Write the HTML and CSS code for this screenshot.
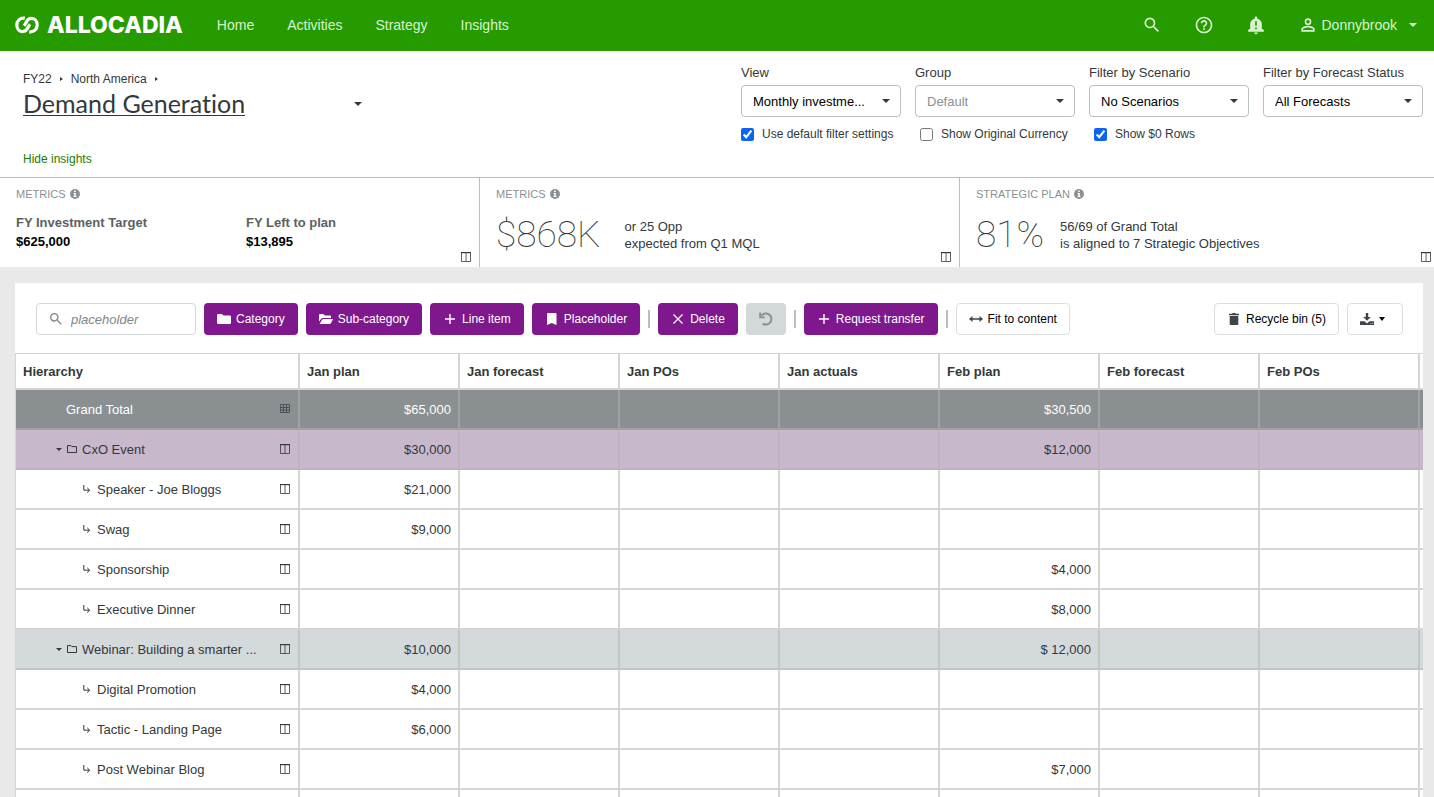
FILE: index.html
```
<!DOCTYPE html>
<html lang="en">
<head>
  <meta charset="UTF-8" />
  <meta name="viewport" content="width=device-width, initial-scale=1.0" />
  <title>Allocadia - Demand Generation</title>
  <link rel="stylesheet" href="styles.css">
</head>
<body>
  <!-- Shared icons -->
  <svg class="sprite" aria-hidden="true">
    <symbol id="i-caret" viewBox="0 0 8 4"><path d="M0 0h8L4 4z" fill="currentColor"/></symbol>
    <symbol id="i-search" viewBox="0 0 24 24"><path fill="currentColor" d="M15.5 14h-.79l-.28-.27A6.47 6.47 0 0 0 16 9.5 6.5 6.5 0 1 0 9.5 16c1.61 0 3.09-.59 4.23-1.57l.27.28v.79l5 4.99L20.49 19l-4.99-5zm-6 0C7.01 14 5 11.99 5 9.5S7.01 5 9.5 5 14 7.01 14 9.5 11.99 14 9.5 14z"/></symbol>
    <symbol id="i-plus" viewBox="0 0 14 14"><path d="M7 2v10M2 7h10" stroke="currentColor" stroke-width="1.4" fill="none"/></symbol>
    <symbol id="i-info" viewBox="0 0 10 10"><circle cx="5" cy="5" r="5" fill="currentColor"/><path d="M4.2 1.6h1.6v1.5H4.2zM3.6 4h2.2v3.1h.7v1h-3v-1h.7V5h-.6z" fill="#fff"/></symbol>
    <symbol id="i-cols" viewBox="0 0 10 10"><path d="M.5 1v8.5h9V1M5 1v8.5" stroke="currentColor" stroke-width=".8" fill="none"/><path d="M0 0h10v1.2H0z" fill="currentColor"/></symbol>
    <symbol id="i-grid" viewBox="0 0 10 10"><path d="M.5 .5h9v8h-9zM.5 3.5h9M.5 6h9M3.5 1v8M6.5 1v8" stroke="currentColor" stroke-width=".9" fill="none"/></symbol>
    <symbol id="i-folder" viewBox="0 0 10 8"><path d="M.5 1v6.5h9V1.6H4.8L4 .6H.5z" stroke="currentColor" fill="none"/></symbol>
    <symbol id="i-child" viewBox="0 0 8 8"><path d="M.8 0v5.2h5.6M4.2 2.8l2.5 2.4-2.5 2.4" stroke="currentColor" fill="none"/></symbol>
  </svg>

  <div class="app">
    <header class="topbar">
      <a class="logo" href="#">
        <svg width="24" height="18" viewBox="0 0 24 18" aria-hidden="true">
          <g fill="none" stroke="#fff" stroke-width="3.2">
            <path d="M9.800 2.200C5 1.400 1.800 5 1.800 9s2.800 6.600 6 6.600c4.800 0 4.700-4.600 7.200-7.400"/>
            <path d="M14.200 15.800c4.800.8 8-2.800 8-6.800s-2.800-6.600-6-6.600c-4.800 0-4.700 4.600-7.200 7.400"/>
          </g>
        </svg>
        <span class="logo-text">ALLOCADIA</span>
      </a>
      <nav class="nav">
        <a href="#">Home</a>
        <a href="#">Activities</a>
        <a href="#">Strategy</a>
        <a href="#">Insights</a>
      </nav>
      <div class="tools">
        <button class="tool" aria-label="Search"><svg width="20" height="20"><use href="#i-search"/></svg></button>
        <button class="tool" aria-label="Help">
          <svg width="20" height="20" viewBox="0 0 24 24"><path fill="currentColor" d="M11 18h2v-2h-2v2zm1-16C6.480 2 2 6.480 2 12s4.480 10 10 10 10-4.480 10-10S17.520 2 12 2zm0 18c-4.410 0-8-3.590-8-8s3.590-8 8-8 8 3.590 8 8-3.590 8-8 8zm0-14c-2.210 0-4 1.790-4 4h2c0-1.100.9-2 2-2s2 .9 2 2c0 2-3 1.750-3 5h2c0-2.250 3-2.500 3-5 0-2.210-1.790-4-4-4z"/></svg>
        </button>
        <button class="tool" aria-label="Notifications">
          <svg width="20" height="20" viewBox="0 0 24 24"><path fill="currentColor" d="M19 16.500V11c0-3.300-2-5.900-5.300-6.600V3.500a1.700 1.700 0 0 0-3.400 0v.9C7 5.100 5 7.700 5 11v5.500L2.500 18v2h19v-2zm-6 .5h-2v-2h2zm0-4h-2V7.500h2zM12 23c1.200 0 2.200-.9 2.200-2H9.800c0 1.100 1 2 2.200 2z"/></svg>
        </button>
        <button class="user">
          <svg width="20" height="20" viewBox="0 0 24 24"><path fill="currentColor" d="M12 5.900a2.100 2.100 0 1 1 0 4.200 2.100 2.100 0 0 1 0-4.200m0 9c2.970 0 6.100 1.460 6.100 2.100v1.100H5.900V17c0-.64 3.130-2.100 6.100-2.100M12 4a4 4 0 1 0 0 8 4 4 0 0 0 0-8zm0 9c-2.670 0-8 1.340-8 4v3h16v-3c0-2.660-5.330-4-8-4z"/></svg>
          <span>Donnybrook</span>
          <svg class="caret" width="8" height="4"><use href="#i-caret"/></svg>
        </button>
      </div>
    </header>

    <section class="page-head">
      <div class="heading">
        <div class="crumbs">
          <a href="#">FY22</a><svg width="3" height="4" viewBox="0 0 3 4"><path d="M0 0l3 2-3 2z" fill="currentColor"/></svg>
          <a href="#">North America</a><svg width="3" height="4" viewBox="0 0 3 4"><path d="M0 0l3 2-3 2z" fill="currentColor"/></svg>
        </div>
        <div class="title-row">
          <h1>Demand Generation</h1>
          <button class="title-toggle" aria-label="Choose budget"><svg width="8" height="4"><use href="#i-caret"/></svg></button>
        </div>
        <a class="hide-link" href="#">Hide insights</a>
      </div>
      <div class="filters">
        <div class="filter">
          <label for="view">View</label>
          <div class="select">
            <select id="view"><option>Monthly investme...</option></select>
            <svg width="8" height="4"><use href="#i-caret"/></svg>
          </div>
          <label class="check"><input type="checkbox" checked> Use default filter settings</label>
        </div>
        <div class="filter">
          <label for="group">Group</label>
          <div class="select">
            <select id="group" class="muted"><option>Default</option></select>
            <svg width="8" height="4"><use href="#i-caret"/></svg>
          </div>
          <label class="check check-inset"><input type="checkbox"> Show Original Currency</label>
        </div>
        <div class="filter">
          <label for="scenario">Filter by Scenario</label>
          <div class="select">
            <select id="scenario"><option>No Scenarios</option></select>
            <svg width="8" height="4"><use href="#i-caret"/></svg>
          </div>
          <label class="check check-inset"><input type="checkbox" checked> Show $0 Rows</label>
        </div>
        <div class="filter">
          <label for="forecast">Filter by Forecast Status</label>
          <div class="select">
            <select id="forecast"><option>All Forecasts</option></select>
            <svg width="8" height="4"><use href="#i-caret"/></svg>
          </div>
        </div>
      </div>
    </section>

    <section class="insights">
      <article class="insight">
        <h2>METRICS <svg width="10" height="10"><use href="#i-info"/></svg></h2>
        <div class="targets">
          <div><span class="target-name">FY Investment Target</span><strong>$625,000</strong></div>
          <div><span class="target-name">FY Left to plan</span><strong>$13,895</strong></div>
        </div>
        <svg class="detail" width="10" height="10"><use href="#i-cols"/></svg>
      </article>
      <article class="insight">
        <h2>METRICS <svg width="10" height="10"><use href="#i-info"/></svg></h2>
        <div class="figure figure-wide">
          <span class="big">$868K</span>
          <p>or 25 Opp<br>expected from Q1 MQL</p>
        </div>
        <svg class="detail" width="10" height="10"><use href="#i-cols"/></svg>
      </article>
      <article class="insight">
        <h2>STRATEGIC PLAN <svg width="10" height="10"><use href="#i-info"/></svg></h2>
        <div class="figure">
          <span class="big">81%</span>
          <p>56/69 of Grand Total<br>is aligned to 7 Strategic Objectives</p>
        </div>
        <svg class="detail" width="10" height="10"><use href="#i-cols"/></svg>
      </article>
    </section>

    <main class="workspace">
      <div class="panel">
        <div class="toolbar">
          <label class="search">
            <svg width="16" height="16"><use href="#i-search"/></svg>
            <input type="text" placeholder="placeholder" aria-label="Search rows">
          </label>
          <button class="btn primary"><svg width="14" height="14" viewBox="0 0 14 14"><path d="M0 3.200Q0 2 1.200 2h3.600l1.700 1.600h6.300Q14 3.600 14 4.800v6Q14 12 12.800 12H1.200Q0 12 0 10.800z" fill="currentColor"/></svg>Category</button>
          <button class="btn primary"><svg width="14" height="14" viewBox="0 0 14 14"><path d="M0 9.500V3q0-1 1-1h3.200l1.600 1.500H11q1 0 1 1V6H3.800q-1 0-1.500.8zM.6 12l2.500-4.300q.4-.7 1.100-.7h9.200q.9 0 .4.800l-2 3.400q-.4.800-1.200.8z" fill="currentColor"/></svg>Sub-category</button>
          <button class="btn primary"><svg width="14" height="14"><use href="#i-plus"/></svg>Line item</button>
          <button class="btn primary"><svg width="14" height="14" viewBox="0 0 14 14"><path d="M2 2q0-1 1-1h7.500q1 0 1 1v11L6.800 11 2 13z" fill="currentColor"/></svg>Placeholder</button>
          <span class="divider"></span>
          <button class="btn primary"><svg width="14" height="14" viewBox="0 0 14 14"><path d="M2.500 2.500l9 9M11.500 2.500l-9 9" stroke="currentColor" stroke-width="1.300" fill="none"/></svg>Delete</button>
          <button class="btn disabled" disabled aria-label="Undo"><svg width="16" height="16" viewBox="0 0 16 16"><path d="M3.200 4.800A5.600 5.600 0 1 1 4.600 12.600" stroke="currentColor" stroke-width="2" fill="none"/><path d="M1.200 1.600v5.600h5.600V5.500H3V1.600z" fill="currentColor"/></svg></button>
          <span class="divider"></span>
          <button class="btn primary"><svg width="14" height="14"><use href="#i-plus"/></svg>Request transfer</button>
          <span class="divider"></span>
          <button class="btn outline"><svg width="14" height="14" viewBox="0 0 14 14"><path d="M0 7l3.500-3v2.200h7V4L14 7l-3.500 3V7.800h-7V10z" fill="currentColor"/></svg>Fit to content</button>
          <button class="btn outline push"><svg width="14" height="14" viewBox="0 0 14 14"><path d="M2 1.800h3L5.600 1h2.800l.6.800h3v1.400H2zM2.700 4h8.600v8q0 1-1 1H3.700q-1 0-1-1z" fill="currentColor"/></svg>Recycle bin (5)</button>
          <button class="btn outline download" aria-label="Download"><svg width="14" height="14" viewBox="0 0 14 14"><path d="M5.800 1h2.400v4h2.600L7 8.800 3.200 5h2.600zM0 9.200h4.600L7 11.400l2.400-2.200H14V13H0z" fill="currentColor"/><path d="M10.500 11.300h.9M12.200 11.300h.9" stroke="#fff" stroke-width=".7"/></svg><svg class="caret-small" width="6" height="4" viewBox="0 0 6 4"><path d="M0 0h6L3 4z" fill="currentColor"/></svg></button>
        </div>

        <div class="table-wrap">
          <table>
            <thead>
              <tr><th class="name-col" scope="col">Hierarchy</th><th scope="col">Jan plan</th><th scope="col">Jan forecast</th><th scope="col">Jan POs</th><th scope="col">Jan actuals</th><th scope="col">Feb plan</th><th scope="col">Feb forecast</th><th scope="col">Feb POs</th><th></th></tr>
            </thead>
            <tbody>
              <tr class="total">
                <td><div class="name top"><span>Grand Total</span><svg width="10" height="10"><use href="#i-grid"/></svg></div></td>
                <td>$65,000</td><td></td><td></td><td></td><td>$30,500</td><td></td><td></td><td></td>
              </tr>
              <tr class="selected">
                <td><div class="name parent"><svg width="6" height="3"><use href="#i-caret"/></svg><svg width="10" height="8"><use href="#i-folder"/></svg><span>CxO Event</span><svg width="10" height="10"><use href="#i-cols"/></svg></div></td>
                <td>$30,000</td><td></td><td></td><td></td><td>$12,000</td><td></td><td></td><td></td>
              </tr>
              <tr>
                <td><div class="name child"><svg width="8" height="8"><use href="#i-child"/></svg><span>Speaker - Joe Bloggs</span><svg width="10" height="10"><use href="#i-cols"/></svg></div></td>
                <td>$21,000</td><td></td><td></td><td></td><td></td><td></td><td></td><td></td>
              </tr>
              <tr>
                <td><div class="name child"><svg width="8" height="8"><use href="#i-child"/></svg><span>Swag</span><svg width="10" height="10"><use href="#i-cols"/></svg></div></td>
                <td>$9,000</td><td></td><td></td><td></td><td></td><td></td><td></td><td></td>
              </tr>
              <tr>
                <td><div class="name child"><svg width="8" height="8"><use href="#i-child"/></svg><span>Sponsorship</span><svg width="10" height="10"><use href="#i-cols"/></svg></div></td>
                <td></td><td></td><td></td><td></td><td>$4,000</td><td></td><td></td><td></td>
              </tr>
              <tr>
                <td><div class="name child"><svg width="8" height="8"><use href="#i-child"/></svg><span>Executive Dinner</span><svg width="10" height="10"><use href="#i-cols"/></svg></div></td>
                <td></td><td></td><td></td><td></td><td>$8,000</td><td></td><td></td><td></td>
              </tr>
              <tr class="category">
                <td><div class="name parent"><svg width="6" height="3"><use href="#i-caret"/></svg><svg width="10" height="8"><use href="#i-folder"/></svg><span>Webinar: Building a smarter ...</span><svg width="10" height="10"><use href="#i-cols"/></svg></div></td>
                <td>$10,000</td><td></td><td></td><td></td><td>$ 12,000</td><td></td><td></td><td></td>
              </tr>
              <tr>
                <td><div class="name child"><svg width="8" height="8"><use href="#i-child"/></svg><span>Digital Promotion</span><svg width="10" height="10"><use href="#i-cols"/></svg></div></td>
                <td>$4,000</td><td></td><td></td><td></td><td></td><td></td><td></td><td></td>
              </tr>
              <tr>
                <td><div class="name child"><svg width="8" height="8"><use href="#i-child"/></svg><span>Tactic - Landing Page</span><svg width="10" height="10"><use href="#i-cols"/></svg></div></td>
                <td>$6,000</td><td></td><td></td><td></td><td></td><td></td><td></td><td></td>
              </tr>
              <tr>
                <td><div class="name child"><svg width="8" height="8"><use href="#i-child"/></svg><span>Post Webinar Blog</span><svg width="10" height="10"><use href="#i-cols"/></svg></div></td>
                <td></td><td></td><td></td><td></td><td>$7,000</td><td></td><td></td><td></td>
              </tr>
              <tr><td></td><td></td><td></td><td></td><td></td><td></td><td></td><td></td><td></td></tr>
            </tbody>
          </table>
        </div>
      </div>
    </main>
  </div>
</body>
</html>
```
FILE: styles.css
```
:root {
  --green: #259b00;
  --purple: #7f188d;
  --text: #33383b;
  --line: #b9c0c0;
  --grid: rgba(178, 178, 178, 0.55);
}
* {
  box-sizing: border-box;
  margin: 0;
  padding: 0;
}
body {
  font-family: "Liberation Sans", Arial, sans-serif;
  font-size: 13px;
  color: var(--text);
  background-color: #fff;
}
a {
  color: inherit;
  text-decoration: none;
}
button, input, select {
  font-family: inherit;
}
button {
  border: none;
  background: none;
  cursor: pointer;
}
svg {
  display: block;
  flex: none;
}
.sprite {
  display: none;
}
.app {
  display: flex;
  flex-direction: column;
  height: 100vh;
  overflow: hidden;
}

/* Top bar */
.topbar {
  display: flex;
  align-items: center;
  flex: none;
  height: 51px;
  padding: 0 17px 2px 15px;
  background-color: var(--green);
  color: #d9f2d2;
}
.logo {
  display: flex;
  align-items: center;
  gap: 8px;
  color: #fff;
}
.logo-text {
  font-family: Inter, sans-serif;
  font-size: 23px;
  font-weight: 800;
  line-height: 24px;
}
.nav {
  display: flex;
  gap: 33px;
  margin-left: 34px;
  font-size: 14px;
}
.tools {
  display: flex;
  align-items: center;
  gap: 32px;
  margin-left: auto;
}
.tool, .user {
  display: flex;
  align-items: center;
  color: inherit;
}
.user {
  gap: 4px;
  font-size: 14px;
}
.user .caret {
  margin-left: 8px;
}

/* Page heading and filters */
.page-head {
  display: flex;
  justify-content: space-between;
  flex: none;
  padding: 14px 11px 9px 23px;
}
.heading {
  display: flex;
  flex-direction: column;
  align-items: flex-start;
  padding-top: 6px;
}
.crumbs {
  display: flex;
  align-items: center;
  gap: 8px;
  font-size: 12px;
  line-height: 16px;
}
.title-row {
  display: flex;
  align-items: center;
  justify-content: space-between;
  width: 339px;
  margin-top: 4px;
}
h1 {
  border-bottom: 1px solid var(--text);
  font-family: Lato, sans-serif;
  font-size: 25px;
  font-weight: 400;
  font-variant-ligatures: none;
  line-height: 24px;
}
.title-toggle {
  color: var(--text);
}
.hide-link {
  margin-top: 34px;
  color: #1c7c00;
  font-size: 12px;
  line-height: 18px;
}
.filters {
  display: flex;
  gap: 14px;
}
.filter {
  width: 160px;
}
.filter label {
  display: block;
  line-height: 16px;
  white-space: nowrap;
}
.select {
  display: grid;
  align-items: center;
  margin-top: 4px;
}
.select > * {
  grid-area: 1 / 1;
}
.select select {
  width: 100%;
  height: 32px;
  padding: 0 28px 0 11px;
  border: 1px solid var(--line);
  border-radius: 4px;
  background-color: #fff;
  color: #000;
  font-size: 13px;
  appearance: none;
}
.select .muted {
  color: #8b9093;
}
.select svg {
  justify-self: end;
  margin-right: 11px;
  pointer-events: none;
}
.filter .check {
  display: flex;
  align-items: center;
  gap: 8px;
  margin-top: 9px;
  font-size: 12px;
}
.check input {
  width: 13px;
  height: 13px;
  accent-color: #0d63f8;
}
.filter .check-inset {
  padding-left: 5px;
}

/* Insights strip, last card runs past the edge of the window */
.insights {
  display: grid;
  grid-template-columns: repeat(3, minmax(0, 1fr));
  flex: none;
  margin-right: -6px;
  border-top: 1px solid var(--line);
}
.insight {
  position: relative;
  height: 89px;
  padding: 8px 16px;
  border-right: 1px solid var(--line);
}
.insight h2 {
  display: flex;
  align-items: center;
  gap: 4px;
  color: #8b9093;
  font-size: 11px;
  font-weight: 400;
  line-height: 16px;
}
.targets {
  display: flex;
  margin-top: 11px;
}
.targets > div {
  width: 230px;
  flex: none;
  line-height: 19px;
}
.target-name {
  display: block;
  color: #5b6164;
  font-weight: 700;
}
.targets strong {
  display: block;
  color: #000;
}
.figure {
  display: flex;
  align-items: center;
  gap: 16px;
  margin-top: 13px;
}
.figure-wide {
  gap: 24px;
}
.figure p {
  line-height: 17px;
}
.big {
  font-family: Roboto, sans-serif;
  font-size: 37px;
  font-weight: 100;
  line-height: 40px;
}
.detail {
  position: absolute;
  right: 8px;
  bottom: 5px;
}

/* Planning table */
.workspace {
  flex: 1;
  min-height: 0;
  padding: 16px 11px 0 15px;
  background-color: #e9e9e9;
}
.panel {
  height: 100%;
  overflow: hidden;
  background-color: #fff;
}
.toolbar {
  display: flex;
  align-items: center;
  gap: 8px;
  padding: 20px 20px 18px 21px;
}
.search {
  display: flex;
  align-items: center;
  gap: 7px;
  width: 160px;
  height: 32px;
  padding: 0 11px;
  border: 1px solid #d2d8d9;
  border-radius: 4px;
  color: #80868a;
}
.search input {
  width: 100%;
  min-width: 0;
  border: none;
  outline: none;
  font-size: 13px;
}
.search input::placeholder {
  color: #80868a;
  font-style: italic;
}
.btn {
  display: flex;
  align-items: center;
  gap: 5px;
  height: 32px;
  padding: 0 13px;
  border-radius: 4px;
  font-size: 12px;
  white-space: nowrap;
}
.primary {
  background-color: var(--purple);
  color: #fff;
}
.outline {
  padding: 0 12px;
  border: 1px solid #dcdfe0;
  background-color: #fff;
  color: #000;
}
.outline svg {
  color: #3f4548;
}
.outline .caret-small {
  color: #000;
}
.download {
  padding-right: 17px;
}
.disabled {
  padding: 0 12px;
  background-color: #d3d9db;
  color: #8b9093;
}
.divider {
  width: 2px;
  height: 18px;
  background-color: #bdbdbd;
}
.push {
  margin-left: auto;
}
.table-wrap {
  overflow: hidden;
}
table {
  width: 1565px;
  table-layout: fixed;
  border-spacing: 0;
  border-left: 1px solid #d5d5d5;
}
th, td {
  padding: 0 7px;
  border-right: 2px solid var(--grid);
  border-bottom: 2px solid var(--grid);
}
th {
  height: 37px;
  border-top: 1px solid #d5d5d5;
  text-align: left;
}
.name-col {
  width: 284px;
}
td {
  height: 40px;
  text-align: right;
}
.name {
  display: flex;
  align-items: center;
  padding-right: 1px;
  text-align: left;
}
.name span {
  flex: 1;
}
.top {
  padding-left: 43px;
}
.parent {
  gap: 5px;
  padding-left: 33px;
}
.child {
  gap: 6px;
  padding-left: 60px;
}
.total {
  background-color: #8a8f92;
}
.total td {
  color: #fff;
}
.total svg {
  color: #464c4f;
}
.selected {
  background-color: #c7b8cb;
}
.category {
  background-color: #d4dadc;
}
```
